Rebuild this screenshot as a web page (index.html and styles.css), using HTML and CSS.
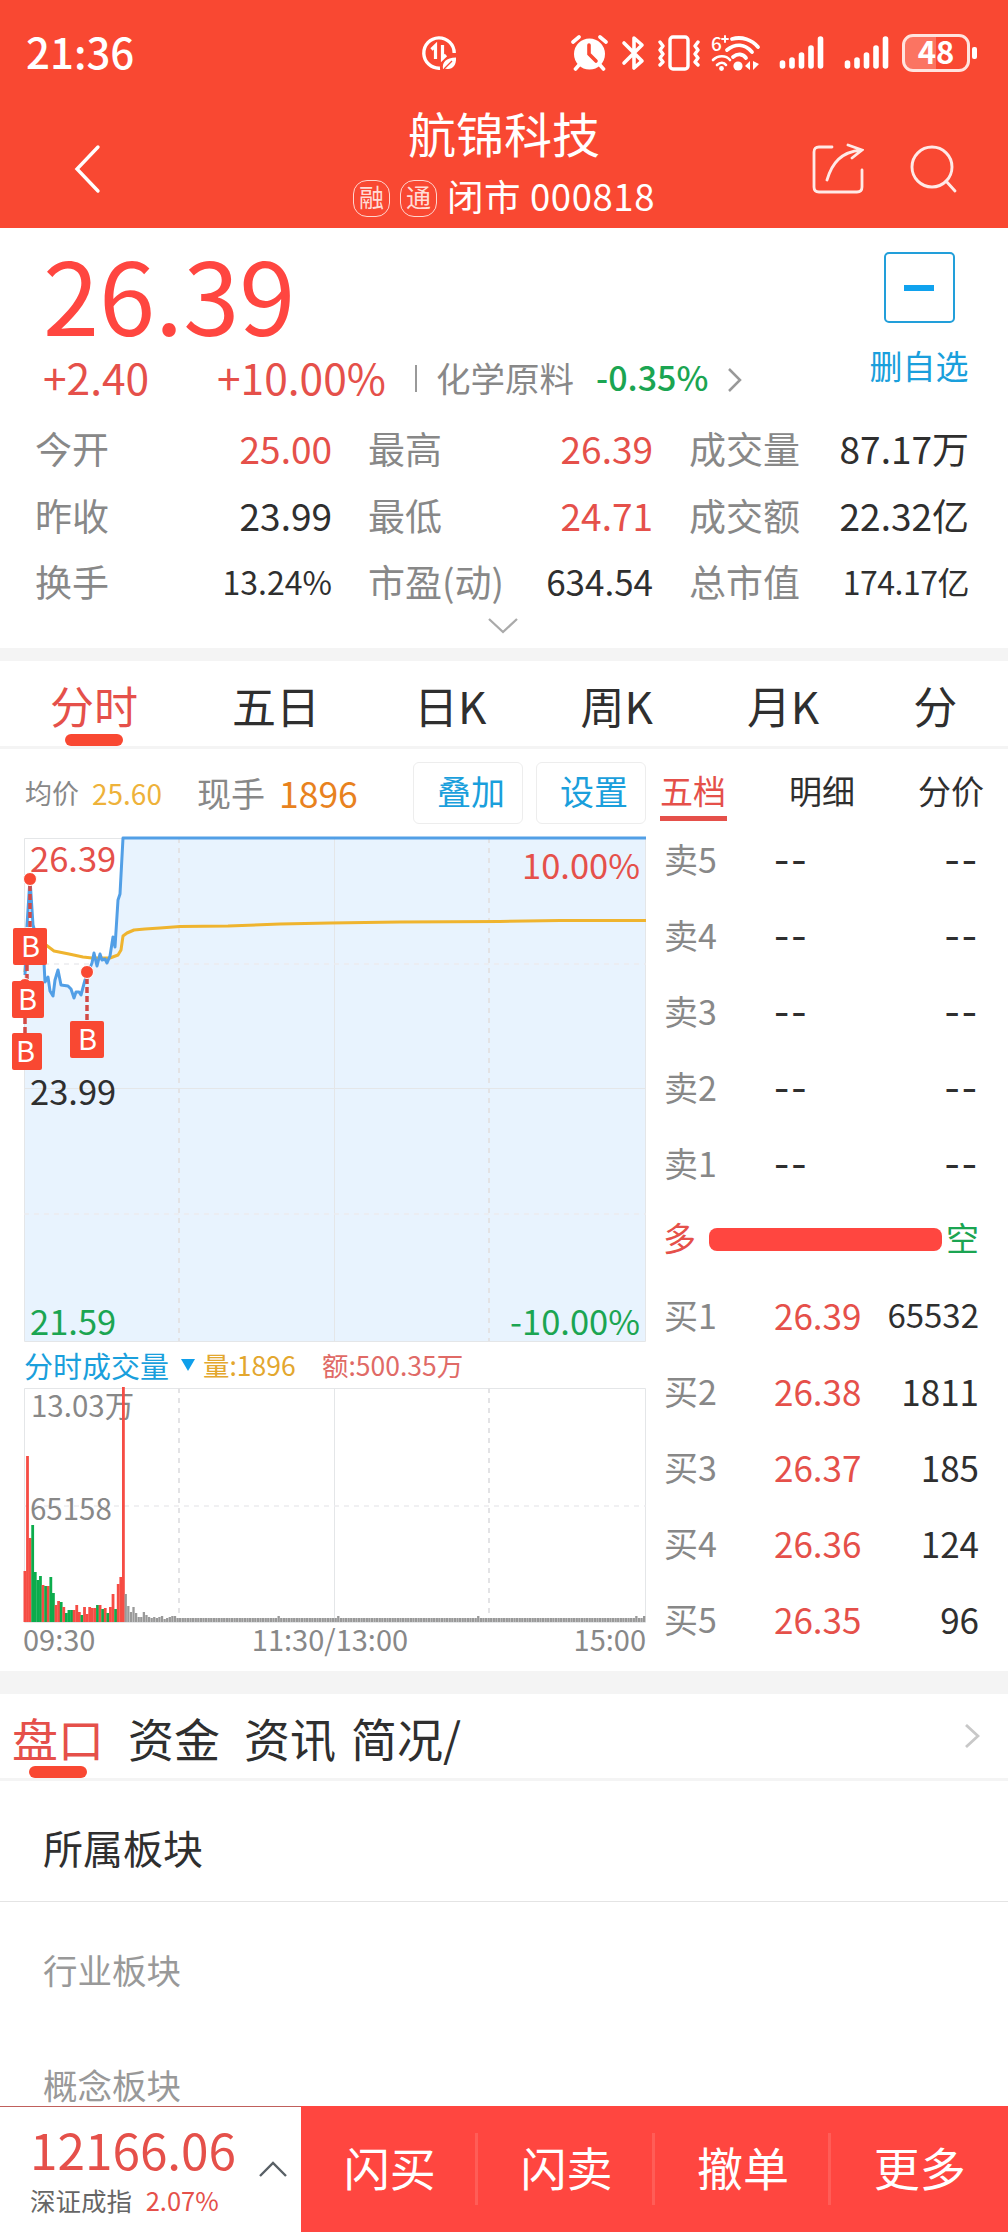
FILE: index.html
```html
<!DOCTYPE html>
<html lang="zh-CN">
<head>
    <meta charset="UTF-8">
    <meta name="viewport" content="width=device-width, initial-scale=1.0">
    <title>航锦科技 000818</title>
    <link rel="stylesheet" href="styles.css">
</head>
<body>
    <header class="header">
        <div class="status-bar">
            <span class="clock">21:36</span>
            <svg class="icon-data" width="36" height="36" viewBox="0 0 36 36" fill="none" stroke="#fff" stroke-width="3.4">
                <path d="M33.2 18A15.2 15.2 0 1 0 19 33.2"/>
                <path d="M10.5 14.5L14.5 10.5V24M21.5 10V23.5L25 20" stroke-width="3.2"/>
                <path d="M22 34C21 27 25 23 35 22.5C35.500 31 31 35 25 33.800Z" fill="#fff" stroke="none"/>
                <path d="M23 34L31 26" stroke="#f94832" stroke-width="1.2"/>
            </svg>
            <div class="status-icons">
                <svg width="37" height="36" viewBox="0 0 37 36">
                    <circle cx="18.500" cy="19" r="15.500" fill="#fff"/>
                    <path d="M2 7L8 2M35 7L29 2M8 30L4.500 34M29 30L32.500 34" stroke="#fff" stroke-width="3.6" stroke-linecap="round"/>
                    <path d="M18 10V19L25 26" fill="none" stroke="#f94832" stroke-width="3.6" stroke-linecap="round"/>
                </svg>
                <svg class="icon-bt" width="24" height="36" viewBox="0 0 24 36" fill="none" stroke="#fff" stroke-width="3.6" stroke-linecap="round" stroke-linejoin="round">
                    <path d="M3 8L21 26L13 33V3L21 10L3 28"/>
                </svg>
                <svg class="icon-vibrate" width="42" height="36" viewBox="0 0 42 36" fill="none" stroke="#fff" stroke-width="3.400" stroke-linecap="round" stroke-linejoin="round">
                    <rect x="12" y="2" width="18" height="32" rx="3"/>
                    <path d="M2 7L5 11L2 15L5 19L2 23L5 27L2 30M40 7L37 11L40 15L37 19L40 23L37 27L40 30"/>
                </svg>
                <svg class="icon-wifi" width="50" height="38" viewBox="0 0 50 38" fill="none" stroke="#fff" stroke-width="3.800" stroke-linecap="round">
                    <path d="M21 5C31 2 41 6 47 13M16 16C25 9 34 10 41 18M22 23C27 19 32 20 35 24"/>
                    <path d="M2 26C7 21 15 21 19 26M6 31C9 28 13 28 15 31" stroke-width="2.600"/>
                    <circle cx="27" cy="32" r="4.600" fill="#fff" stroke="none"/>
                    <circle cx="10.500" cy="34.500" r="2.400" fill="#fff" stroke="none"/>
                    <path d="M34 32L39 27V36ZM42 27V36L48 30Z" fill="#fff" stroke="none"/>
                    <text x="0" y="17" class="wifi-gen">6</text>
                    <path d="M11 5H17M14 2V8" stroke-width="1.900"/>
                </svg>
                <svg class="icon-signal" width="45" height="36" viewBox="0 0 45 36" stroke="#fff" stroke-width="5.600" stroke-linecap="round">
                    <path d="M3.500 28V31M13 25V31M22.500 20V31M32 13V31M41.500 4V31"/>
                </svg>
                <svg class="icon-signal2" width="45" height="36" viewBox="0 0 45 36" stroke="#fff" stroke-width="5.600" stroke-linecap="round">
                    <path d="M3.500 28V31M13 25V31M22.500 20V31M32 13V31M41.500 4V31"/>
                </svg>
                <div class="battery"><span>48</span></div>
                <div class="battery-cap"></div>
            </div>
        </div>
        <div class="nav-bar">
            <svg class="icon-back" width="28" height="50" viewBox="0 0 28 50" fill="none" stroke="#fff" stroke-width="3.400" stroke-linecap="round">
                <path d="M24 3L3 25L24 47"/>
            </svg>
            <div class="stock-title">
                <h1>航锦科技</h1>
                <div class="stock-sub">
                    <span class="tag">融</span>
                    <span class="tag">通</span>
                    <span class="stock-state">闭市 000818</span>
                </div>
            </div>
            <div class="nav-actions">
                <svg width="52" height="52" viewBox="0 0 52 52" fill="none" stroke="#ffeae7" stroke-width="2.800" stroke-linecap="round">
                    <path d="M20 4H7Q2 4 2 9V44Q2 49 7 49H45Q50 49 50 44V27"/>
                    <path d="M15 37C20 20 29 9 49 7M36 2L50 7L40 15"/>
                </svg>
                <svg width="48" height="50" viewBox="0 0 48 50" fill="none" stroke="#ffeae7" stroke-width="2.900" stroke-linecap="round">
                    <circle cx="22" cy="23" r="20"/>
                    <path d="M36 37L45 47"/>
                </svg>
            </div>
        </div>
    </header>

    <section class="quote">
        <div class="quote-top">
            <div>
                <div class="price">26.39</div>
                <div class="change-row">
                    <span class="change">+2.40</span>
                    <span class="change-pct">+10.00%</span>
                    <span class="bar"></span>
                    <span class="sector">化学原料</span>
                    <span class="sector-pct">-0.35%</span>
                    <svg width="15" height="26" viewBox="0 0 15 26" fill="none" stroke="#999" stroke-width="2.500"><path d="M2 2L13 13L2 24"/></svg>
                </div>
            </div>
            <div class="follow">
                <div class="follow-box"><i></i></div>
                <span>删自选</span>
            </div>
        </div>
        <dl class="stats">
            <div><dt>今开</dt><dd class="red">25.00</dd></div>
            <div><dt>最高</dt><dd class="red">26.39</dd></div>
            <div><dt>成交量</dt><dd>87.17万</dd></div>
            <div><dt>昨收</dt><dd>23.99</dd></div>
            <div><dt>最低</dt><dd class="red">24.71</dd></div>
            <div><dt>成交额</dt><dd>22.32亿</dd></div>
            <div><dt>换手</dt><dd class="small">13.24%</dd></div>
            <div><dt>市盈(动)</dt><dd class="medium">634.54</dd></div>
            <div><dt>总市值</dt><dd class="small">174.17亿</dd></div>
        </dl>
        <svg class="expand" width="32" height="18" viewBox="0 0 32 18" fill="none" stroke="#aaa" stroke-width="2.300"><path d="M2 2L16 15L30 2"/></svg>
    </section>

    <nav class="period-tabs">
        <a class="active">分时</a>
        <a>五日</a>
        <a>日K</a>
        <a>周K</a>
        <a>月K</a>
        <a>分</a>
    </nav>

    <main class="market">
        <div class="charts">
            <div class="chart-head">
                <span class="avg-label">均价</span>
                <span class="avg-value">25.60</span>
                <span class="hand-label">现手</span>
                <span class="hand-value">1896</span>
                <button class="chart-btn">叠加</button>
                <button class="chart-btn">设置</button>
            </div>

            <svg class="price-chart" width="646" height="508" viewBox="0 836 646 508">
                <path class="area" d="M24 975L27 925L30 879L33 925L44 963L45 982L48 977L50 991L53 996L55 980L58 970L61 985L68 986L71 989L74 998L76 992L79 992L81 995L85 980L92 963L94 953L97 966L100 954L102 960L105 959L107 963L110 956L113 937L115 947L118 900L120 894L123 838H646V1341H24Z"/>
                <path class="frame" d="M24.500 838.500H645.500V1341.500H24.500ZM24 1088.500H646M334.500 838V1341"/>
                <path class="dash" d="M179 838V1341M489 838V1341"/>
                <path class="dash light" d="M24 964H646M24 1214H646"/>
                <path class="avg-line" d="M25 972L28 930L33 935L46 945L54 951L69 954L83 957L92 958L110 958L118 955L121 950L123 936L127 933L134 930L145 929L160 928L180 926.500L228 926L280 924L330 923L400 922L500 921.500L560 920.500H646"/>
                <path class="price-line" d="M25 975L27 925L30 879L33 925L44 963L45 982L48 977L50 991L53 996L55 980L58 970L61 985L68 986L71 989L74 998L76 992L79 992L81 995L85 980L92 963L94 953L97 966L100 954L102 960L105 959L107 963L110 956L113 937L115 947L118 900L120 894L123 838H646"/>
                <path class="marker-line" d="M30 885V928M27 965V982M25 1018V1034M87 978V1021"/>
                <g class="dots">
                    <circle cx="30" cy="879" r="6.500"/>
                    <circle cx="27" cy="934" r="6.500"/>
                    <circle cx="25" cy="985" r="6.500"/>
                    <circle cx="87" cy="972" r="6.500"/>
                </g>
                <g class="flags">
                    <rect x="13" y="928" width="34" height="37" rx="2"/>
                    <rect x="12" y="981" width="32" height="37" rx="2"/>
                    <rect x="12" y="1033" width="30" height="37" rx="2"/>
                    <rect x="70" y="1021" width="34" height="37" rx="2"/>
                    <text x="30.500" y="957">B</text>
                    <text x="27.500" y="1010">B</text>
                    <text x="25.500" y="1062">B</text>
                    <text x="87.500" y="1050">B</text>
                </g>
                <text class="axis red" x="30" y="872">26.39</text>
                <text class="axis red" x="640" y="879" text-anchor="end">10.00%</text>
                <text class="axis" x="30" y="1105">23.99</text>
                <text class="axis green" x="30" y="1335">21.59</text>
                <text class="axis green" x="640" y="1335" text-anchor="end">-10.00%</text>
            </svg>

            <div class="volume-head">
                <span class="volume-name">分时成交量</span>
                <svg width="14" height="12" viewBox="0 0 14 12"><path d="M0 0H14L7 12Z" fill="#0f9fea"/></svg>
                <span class="volume-count">量:1896</span>
                <span class="volume-sum">额:500.35万</span>
            </div>

            <svg class="volume-chart" width="646" height="238" viewBox="0 1386 646 238">
                <path class="frame" d="M24.500 1388.500H645.500V1622.500H24.500ZM334.500 1388V1622"/>
                <path class="dash" d="M179 1388V1622M489 1388V1622"/>
                <path class="dash light" d="M24 1506H646"/>
                <text class="vol-axis" x="31" y="1417">13.03万</text>
                <text class="vol-axis" x="30" y="1520">65158</text>
                <g id="bars"></g>
            </svg>
            <div class="time-axis"><span>09:30</span><span class="noon">11:30/13:00</span><span>15:00</span></div>
        </div>

        <aside class="order-book">
            <div class="book-tabs"><a class="active">五档</a><a>明细</a><a>分价</a></div>
            <div class="level"><span>卖5</span><span class="none">--</span><span class="none">--</span></div>
            <div class="level"><span>卖4</span><span class="none">--</span><span class="none">--</span></div>
            <div class="level"><span>卖3</span><span class="none">--</span><span class="none">--</span></div>
            <div class="level"><span>卖2</span><span class="none">--</span><span class="none">--</span></div>
            <div class="level"><span>卖1</span><span class="none">--</span><span class="none">--</span></div>
            <div class="power"><span class="red">多</span><i></i><span class="green">空</span></div>
            <div class="level"><span>买1</span><b>26.39</b><em class="long">65532</em></div>
            <div class="level"><span>买2</span><b>26.38</b><em>1811</em></div>
            <div class="level"><span>买3</span><b>26.37</b><em>185</em></div>
            <div class="level"><span>买4</span><b>26.36</b><em>124</em></div>
            <div class="level"><span>买5</span><b>26.35</b><em>96</em></div>
        </aside>
    </main>

    <nav class="info-tabs">
        <a class="active">盘口</a>
        <a>资金</a>
        <a>资讯</a>
        <a>简况/</a>
        <svg width="15" height="24" viewBox="0 0 15 24" fill="none" stroke="#c8c8c8" stroke-width="2.800"><path d="M1 1L13 12L1 23"/></svg>
    </nav>

    <section class="sectors">
        <h2>所属板块</h2>
        <p>行业板块</p>
        <p>概念板块</p>
    </section>

    <footer class="footer">
        <div class="index">
            <div>
                <div class="index-value">12166.06</div>
                <div class="index-name">深证成指 <span>2.07%</span></div>
            </div>
            <svg width="28" height="16" viewBox="0 0 28 16" fill="none" stroke="#596066" stroke-width="2.400"><path d="M1 15L14 2L27 15"/></svg>
        </div>
        <button>闪买</button>
        <button>闪卖</button>
        <button>撤单</button>
        <button>更多</button>
    </footer>

    <script>
        // minute volume bars: r = up, g = down, x = limit locked
        const volumes = 'r51 r166 r84 g97 g50 g42 g46 r37 g36 r36 g45 g29 r17 r21 g20 r15 g9 g12 g12 r12 r17 r10 g7 r15 r8 r15 r14 r14 g17 r17 g13 r14 g9 r15 r28 g13 r38 r45 r235 x28 x16 x10 x15 x9 x5 x5 x10 x7 x5 x4 x5 x4 x5 x6 x3 x4 x5 x6 x6 x4'.split(' ');
        const spikes = [98, 121, 175, 236, 239];
        const colors = { r: '#f64c44', g: '#0cac4c', x: '#999' };
        const bars = document.getElementById('bars');

        for (let i = 0; i < 240; i++) {
            const item = volumes[i] || (spikes.includes(i) ? 'x6' : 'x4');
            const h = Number(item.slice(1));
            const rect = document.createElementNS('http://www.w3.org/2000/svg', 'rect');
            rect.setAttribute('x', 23.5 + i * 2.592);
            rect.setAttribute('y', 1622 - h);
            rect.setAttribute('width', item[0] === 'x' ? 2.3 : 2.8);
            rect.setAttribute('height', h);
            rect.setAttribute('fill', colors[item[0]]);
            bars.appendChild(rect);
        }
    </script>
</body>
</html>
```
FILE: styles.css
```css
:root {
    --header: #f94832;
    --red: #e5504a;
    --bright-red: #ff4640;
    --green: #1ba552;
    --blue: #1a9fdc;
    --text: #2f2f2f;
    --gray: #888;
    --line: #f4f4f4;
}

* {
    box-sizing: border-box;
}

body {
    margin: 0;
    width: 1008px;
    height: 2232px;
    overflow: hidden;
    display: flex;
    flex-direction: column;
    background: #fff;
    color: var(--text);
    font-family: "Noto Sans CJK SC", sans-serif;
    font-size: 36px;
}

svg {
    display: block;
    flex: none;
}

h1, h2, p, dl, dd {
    margin: 0;
    font-weight: 400;
}

button {
    font-family: inherit;
    padding: 0;
    border: none;
    background: none;
}

.red { color: var(--red); }
.green { color: var(--green); }

/* header */
.header {
    height: 228px;
    background: var(--header);
    color: #fff;
}

.status-bar {
    display: flex;
    align-items: center;
    height: 106px;
    padding: 0 31px 0 26px;
}

.clock {
    width: 395px;
    font-size: 42px;
    font-weight: 500;
    line-height: 60px;
    margin-top: -4px;
}

.status-icons {
    display: flex;
    align-items: center;
    margin-left: auto;
}

.icon-bt { margin-left: 13px; }
.icon-vibrate { margin-left: 13px; }
.icon-wifi { margin-left: 11px; }
.icon-signal { margin-left: 18px; }
.icon-signal2 { margin-left: 20px; }

.wifi-gen {
    font-size: 19px;
    font-weight: 500;
    fill: #fff;
    stroke: none;
}

.battery {
    width: 68px;
    height: 38px;
    margin-left: 13px;
    border: 3px solid #ffe4df;
    border-radius: 11px;
    background: linear-gradient(90deg, #fb7462 50%, transparent 50%);
    text-align: center;
    font-size: 31px;
    font-weight: 700;
    line-height: 28px;
}

.battery-cap {
    width: 5px;
    height: 12px;
    margin-left: 2px;
    border-radius: 2px;
    background: #fff;
}

.nav-bar {
    display: flex;
    padding: 0 50px 0 74px;
}

.icon-back {
    margin-top: 38px;
}

.stock-title {
    width: 320px;
    margin-left: 242px;
    text-align: center;
}

h1 {
    font-size: 48px;
    line-height: 50px;
    margin-top: 1px;
}

.stock-sub {
    display: flex;
    justify-content: center;
    align-items: center;
    height: 44px;
    margin-top: 19px;
    white-space: nowrap;
}

.tag {
    width: 37px;
    height: 37px;
    margin-right: 10px;
    border: 1.500px solid #ffd5cf;
    border-radius: 14px;
    color: #ffdcd7;
    font-size: 25px;
    line-height: 31px;
}

.stock-state {
    font-size: 36.500px;
    line-height: 44px;
    letter-spacing: 0.6px;
    margin-top: -4px;
}

.nav-actions {
    display: flex;
    align-items: center;
    gap: 46px;
    height: 52px;
    margin: 37px 0 0 auto;
}

/* quote */
.quote {
    height: 433px;
    border-bottom: 13px solid var(--line);
}

.quote-top {
    display: flex;
    justify-content: space-between;
    padding: 13px 39px 0 43px;
}

.price {
    color: var(--bright-red);
    font-size: 101px;
    line-height: 102px;
}

.change-row {
    display: flex;
    align-items: center;
    height: 50px;
    margin-top: 9px;
    white-space: nowrap;
}

.change, .change-pct {
    width: 174px;
    color: var(--red);
    font-size: 42.500px;
    line-height: 50px;
}

.change-pct {
    width: 198px;
}

.bar {
    width: 2px;
    height: 27px;
    margin-top: 3px;
    background: #999;
}

.sector {
    margin-left: 19px;
    color: var(--gray);
    font-size: 34.500px;
    line-height: 52px;
}

.sector-pct {
    width: 131px;
    margin-left: 22px;
    color: var(--green);
    font-size: 34px;
    font-weight: 500;
    line-height: 50px;
}

.change-row svg {
    margin-top: 6px;
}

.follow {
    width: 100px;
    padding-top: 11px;
    color: var(--blue);
    font-size: 33px;
    line-height: 40px;
    text-align: center;
    white-space: nowrap;
}

.follow-box {
    display: flex;
    align-items: center;
    justify-content: center;
    width: 71px;
    height: 71px;
    margin: 0 auto 22px;
    border: 2.500px solid #229fda;
    border-radius: 5px;
}

.follow-box i {
    width: 30px;
    height: 6px;
    background: #10a2ee;
}

.stats {
    display: grid;
    grid-template-columns: 297px 285px 280px;
    column-gap: 36px;
    padding: 13px 0 0 35px;
}

.stats div {
    display: flex;
    justify-content: space-between;
    height: 66.500px;
    line-height: 66px;
    white-space: nowrap;
}

.stats dt {
    color: var(--gray);
    font-size: 37px;
}

.stats dd { font-size: 37px; }
.stats dd.small { font-size: 32px; }
.stats dd.medium { font-size: 35px; }

.stats div:last-child dd {
    letter-spacing: -0.5px;
}

.expand {
    margin: 2px 0 0 487px;
}

/* period tabs */
.period-tabs {
    display: flex;
    gap: 94px;
    height: 88px;
    padding-left: 50px;
    border-bottom: 3px solid var(--line);
    font-size: 44px;
    line-height: 89px;
    white-space: nowrap;
}

.period-tabs a.active,
.info-tabs a.active {
    position: relative;
    color: var(--red);
}

.period-tabs a.active::after,
.info-tabs a.active::after {
    content: "";
    position: absolute;
    left: 50%;
    bottom: 0;
    width: 58px;
    height: 12px;
    margin-left: -29px;
    border-radius: 6px;
    background: var(--header);
}

/* charts */
.market {
    display: flex;
    height: 945px;
    border-bottom: 23px solid var(--line);
}

.charts {
    width: 646px;
}

.chart-head {
    display: flex;
    align-items: center;
    height: 87px;
    padding-left: 25px;
    line-height: 60px;
    white-space: nowrap;
}

.chart-head > * {
    flex: none;
}

.avg-label {
    width: 67px;
    color: var(--gray);
    font-size: 27px;
}

.avg-value {
    width: 105px;
    color: #eeb23a;
    font-size: 28px;
}

.hand-label {
    width: 82px;
    color: var(--gray);
    font-size: 34px;
}

.hand-value {
    width: 134px;
    color: #e8821e;
    font-size: 35.500px;
}

.chart-btn {
    width: 110px;
    height: 62px;
    padding: 0 0 4px 6px;
    border: 1.500px solid #ededed;
    border-radius: 6px;
    color: var(--blue);
    font-size: 34px;
    line-height: 56px;
}

.chart-btn + .chart-btn {
    margin-left: 13px;
}

.frame {
    fill: none;
    stroke: #e4e6e8;
}

.dash {
    fill: none;
    stroke: #e3e3e5;
    stroke-width: 2;
    stroke-dasharray: 5 5;
}

.dash.light {
    stroke: #ececee;
    stroke-width: 1.500;
}

.area {
    fill: #e8f3fe;
}

.price-line, .avg-line {
    fill: none;
    stroke: #529fe6;
    stroke-width: 3;
    stroke-linejoin: round;
}

.avg-line {
    stroke: #efb42f;
}

.marker-line {
    stroke: #d24a45;
    stroke-width: 3.500;
    stroke-dasharray: 6 3;
}

.dots circle {
    fill: var(--header);
    stroke: #fff;
    stroke-width: 1;
}

.flags {
    fill: var(--header);
}

.flags text {
    fill: #fff;
    font-size: 29px;
    text-anchor: middle;
}

.axis {
    font-size: 34.500px;
    fill: var(--text);
}

.axis.red { fill: var(--red); }
.axis.green { fill: var(--green); }

.volume-head {
    display: flex;
    align-items: center;
    height: 42px;
    padding-left: 24px;
    line-height: 44px;
    white-space: nowrap;
}

.volume-name {
    width: 157px;
    color: var(--blue);
    font-size: 29px;
}

.volume-count {
    width: 119px;
    margin-left: 8px;
    color: #e3a72e;
    font-size: 26.500px;
}

.volume-sum {
    color: #e06a66;
    font-size: 26.500px;
}

.vol-axis {
    fill: var(--gray);
    font-size: 29.500px;
}

.time-axis {
    display: flex;
    justify-content: space-between;
    padding-left: 23px;
    color: var(--gray);
    font-size: 29px;
    line-height: 28px;
}

.time-axis .noon {
    margin-right: 9px;
}

/* order book */
.order-book {
    width: 362px;
    padding: 14px 29px 0 14px;
}

.book-tabs {
    display: flex;
    justify-content: space-between;
    height: 58px;
    margin-right: -6px;
    font-size: 33px;
    line-height: 55px;
}

.book-tabs a {
    width: 67px;
    white-space: nowrap;
}

.book-tabs a.active {
    color: var(--red);
    border-bottom: 5px solid var(--red);
}

.level {
    display: grid;
    grid-template-columns: 110px 110px 1fr;
    height: 76px;
    padding-left: 4px;
    line-height: 75px;
    font-size: 34px;
    color: var(--gray);
    white-space: nowrap;
}

.level b, .level em {
    color: var(--red);
    font-size: 35px;
    font-weight: 400;
    font-style: normal;
}

.level em {
    color: var(--text);
    text-align: right;
}

.level em.long {
    font-size: 33px;
}

.level .none {
    color: var(--text);
    font-size: 44px;
    letter-spacing: 2px;
    line-height: 70px;
}

.level .none:last-child {
    text-align: right;
}

.power {
    display: flex;
    align-items: center;
    height: 76px;
    padding: 0 0 4px 3px;
    font-size: 33px;
    line-height: 60px;
}

.power i {
    width: 233px;
    height: 23px;
    margin: 4px 4px 0 13px;
    flex: none;
    border-radius: 8px;
    background: var(--bright-red);
}

/* info tabs */
.info-tabs {
    display: flex;
    height: 87px;
    padding-left: 12px;
    border-bottom: 3px solid var(--line);
    font-size: 46px;
    line-height: 86px;
    white-space: nowrap;
}

.info-tabs a {
    margin-right: 24px;
}

.info-tabs a:nth-of-type(3) {
    margin-right: 15px;
}

.info-tabs svg {
    margin: 30px 28px 0 auto;
}

.sectors {
    height: 325px;
}

.sectors h2 {
    height: 121px;
    padding-left: 43px;
    border-bottom: 1px solid #e4e4e4;
    font-size: 40px;
    line-height: 132px;
}

.sectors p {
    height: 115px;
    padding-left: 43px;
    color: #999;
    font-size: 34.500px;
    line-height: 134px;
}

/* footer */
.footer {
    position: relative;
    display: flex;
    height: 126px;
    background: var(--bright-red);
}

.index {
    display: flex;
    justify-content: space-between;
    width: 302px;
    padding: 16px 14px 0 30px;
    border-top: 1px solid #c0605c;
    background: #fff;
}

.index svg {
    margin-top: 38px;
}

.index-value {
    color: var(--red);
    font-size: 49.500px;
    line-height: 52px;
}

.index-name {
    margin-top: 5px;
    color: #666;
    font-size: 25.500px;
    line-height: 40px;
    white-space: nowrap;
}

.index-name span {
    margin-left: 8px;
    color: var(--red);
}

.footer button {
    position: relative;
    width: 177px;
    padding-bottom: 5px;
    color: #fff;
    font-size: 46px;
    line-height: 121px;
}

.footer button:not(:last-child)::after {
    content: "";
    position: absolute;
    right: 0;
    top: 27px;
    width: 3px;
    height: 72px;
    background: #ff5d57;
}
```
